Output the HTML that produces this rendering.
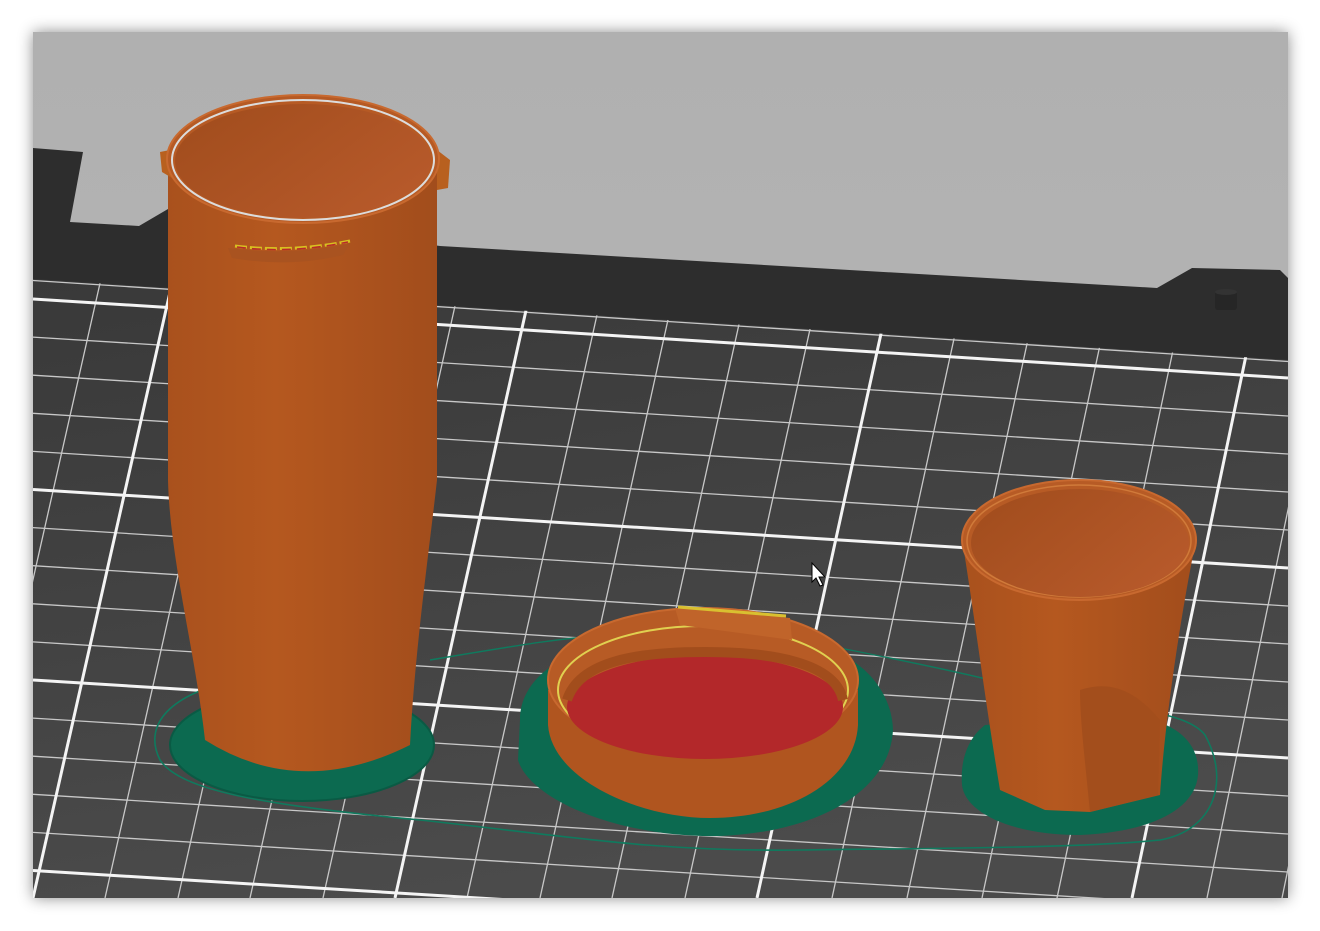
<!DOCTYPE html>
<html><head><meta charset="utf-8"><style>
html,body{margin:0;padding:0;background:#fff;width:1320px;height:931px;overflow:hidden}
.frame{position:absolute;left:33px;top:32px;width:1255px;height:866px;box-shadow:0 0 14px rgba(0,0,0,.45)}
svg{position:absolute;left:0;top:0;overflow:hidden}
</style></head><body>
<div class="frame"></div>
<svg width="1320" height="931" viewBox="0 0 1320 931">
<defs>
<clipPath id="img"><rect x="33" y="32" width="1255" height="866"/></clipPath>
<clipPath id="plate"><polygon points="33,279 1288,360 1288,898 33,898"/></clipPath>
<linearGradient id="sky" x1="0" y1="0" x2="0" y2="1"><stop offset="0" stop-color="#b0b0b0"/><stop offset="1" stop-color="#b8b8b8"/></linearGradient>
<linearGradient id="pl" x1="0" y1="0" x2="0.3" y2="1"><stop offset="0" stop-color="#393939"/><stop offset="1" stop-color="#4b4b4b"/></linearGradient>
<linearGradient id="body" x1="0" y1="0" x2="1" y2="0"><stop offset="0" stop-color="#a9511d"/><stop offset="0.4" stop-color="#b5581f"/><stop offset="1" stop-color="#a24d1c"/></linearGradient>
<linearGradient id="inner" x1="0" y1="0" x2="1" y2="0.6"><stop offset="0" stop-color="#a04c1c"/><stop offset="1" stop-color="#b6592a"/></linearGradient>
</defs>
<g clip-path="url(#img)">
<rect x="33" y="32" width="1255" height="866" fill="url(#sky)"/>
<polygon fill="#2d2d2d" points="33,148 83,152 70,222 139,226 168,209 440,246 1157,288 1192,268 1280,270 1288,278 1288,898 33,898"/>
<rect x="1215" y="291" width="22" height="19" rx="3" fill="#262626"/>
<ellipse cx="1226" cy="292" rx="11" ry="3" fill="#333"/>
<polygon points="33,279 1288,360 1288,898 33,898" fill="url(#pl)"/>
<g clip-path="url(#plate)">
<g stroke="#c8c8c8" stroke-width="1.3">
<line x1="31" y1="270" x2="-112" y2="898"/><line x1="103" y1="270" x2="-39" y2="898"/>
<line x1="247" y1="270" x2="105" y2="898"/><line x1="319" y1="270" x2="178" y2="898"/>
<line x1="391" y1="270" x2="250" y2="898"/><line x1="463" y1="270" x2="323" y2="898"/>
<line x1="607" y1="270" x2="467" y2="898"/><line x1="679" y1="270" x2="540" y2="898"/>
<line x1="751" y1="270" x2="612" y2="898"/><line x1="823" y1="270" x2="685" y2="898"/>
<line x1="969" y1="270" x2="832" y2="898"/><line x1="1043" y1="270" x2="907" y2="898"/>
<line x1="1116" y1="270" x2="982" y2="898"/><line x1="1190" y1="270" x2="1057" y2="898"/>
<line x1="1338" y1="270" x2="1207" y2="898"/><line x1="1412" y1="270" x2="1282" y2="898"/>
<line x1="33" y1="337.1" x2="1288" y2="416"/><line x1="33" y1="375.2" x2="1288" y2="454"/>
<line x1="33" y1="413.3" x2="1288" y2="492"/><line x1="33" y1="451.4" x2="1288" y2="530"/>
<line x1="33" y1="527.6" x2="1288" y2="606"/><line x1="33" y1="565.7" x2="1288" y2="644"/>
<line x1="33" y1="603.8" x2="1288" y2="682"/><line x1="33" y1="641.9" x2="1288" y2="720"/>
<line x1="33" y1="718.1" x2="1288" y2="796"/><line x1="33" y1="756.2" x2="1288" y2="834"/>
<line x1="33" y1="794.3" x2="1288" y2="872"/><line x1="33" y1="832.4" x2="1288" y2="910"/>
<line x1="33" y1="280.5" x2="1288" y2="361.5"/>
</g>
<g stroke="#f4f4f4" stroke-width="3">
<line x1="175" y1="270" x2="33" y2="898"/><line x1="535" y1="270" x2="395" y2="898"/>
<line x1="895" y1="270" x2="757" y2="898"/><line x1="1264" y1="270" x2="1132" y2="898"/>
<line x1="33" y1="299" x2="1288" y2="378"/><line x1="33" y1="489.5" x2="1288" y2="568"/>
<line x1="33" y1="680" x2="1288" y2="758"/><line x1="33" y1="870.5" x2="1288" y2="948"/>
</g>
</g>
<path d="M240,680 C180,690 140,720 160,760 C180,790 260,805 420,820 C560,835 650,852 800,850 C950,848 1080,848 1160,840 C1215,830 1230,780 1205,735 C1195,722 1170,715 1150,712" fill="none" stroke="#0f7a5e" stroke-width="1.6"/>
<path d="M430,660 C520,645 560,638 610,635 C700,632 800,640 850,650 C900,660 950,670 990,680" fill="none" stroke="#0f7a5e" stroke-width="1.4"/>
<ellipse cx="302" cy="745" rx="132" ry="56" fill="#0c6a50" stroke="#0a5a44" stroke-width="2"/>
<path d="M520,720 C520,680 560,650 620,642 L800,642 C860,650 892,690 893,730 C890,790 820,832 720,836 C620,838 530,800 518,760 Z" fill="#0c6a50"/>
<path d="M985,725 L1130,715 C1180,722 1200,745 1198,775 C1195,810 1150,832 1080,835 C1010,835 965,812 962,785 C960,760 968,738 985,725 Z" fill="#0c6a50"/>
<path d="M168,158 L168,480 C170,560 195,650 205,740 Q300,800 410,745 C415,650 428,560 437,480 L437,158 Z" fill="url(#body)"/>
<path d="M160,152 L170,150 L172,178 L162,172 Z" fill="#b8601f"/>
<path d="M437,150 L450,160 L448,188 L437,190 Z" fill="#b8601f"/>
<ellipse cx="303" cy="159" rx="136" ry="64" fill="#b65a24" stroke="#c8692f" stroke-width="2"/>
<ellipse cx="303" cy="160" rx="131" ry="60" fill="none" stroke="#dcdcdc" stroke-width="2"/>
<ellipse cx="303" cy="161" rx="128" ry="57" fill="url(#inner)"/>
<path d="M228,248 Q290,256 350,244 L343,255 Q290,268 232,258 Z" fill="#a95320"/>
<path d="M235,246 Q290,253 350,241" fill="none" stroke="#d8c020" stroke-width="3" stroke-dasharray="12,3"/>
<path d="M237,247 Q290,254 348,242" fill="none" stroke="#b82a2a" stroke-width="1.5" stroke-dasharray="9,6"/>
<path d="M548,690 L548,725 C552,780 640,818 710,818 C790,818 855,780 858,725 L858,690 Z" fill="#b0551f"/>
<ellipse cx="703" cy="680" rx="155" ry="72" fill="#b75b25" stroke="#c8692f" stroke-width="2"/>
<ellipse cx="703" cy="690" rx="145" ry="64" fill="none" stroke="#e0d050" stroke-width="2"/>
<ellipse cx="705" cy="707" rx="138" ry="52" fill="#b3282a"/>
<path d="M567,700 C580,660 640,652 705,652 C770,652 835,662 843,700" fill="none" stroke="#a24d1c" stroke-width="10"/>
<path d="M675,608 L790,618 L792,640 L680,625 Z" fill="#c0642a"/>
<path d="M678,607 L786,616" stroke="#d9c030" stroke-width="3"/>
<path d="M963,545 C975,620 985,700 1000,790 L1045,810 L1090,812 L1160,795 C1165,720 1180,620 1195,545 Z" fill="url(#body)"/>
<path d="M1080,690 C1110,680 1135,690 1160,720 L1158,795 L1090,812 C1085,760 1080,720 1080,690 Z" fill="#a34e1c"/>
<ellipse cx="1079" cy="540" rx="117" ry="60" fill="#b75b25" stroke="#c8692f" stroke-width="2"/>
<ellipse cx="1079" cy="541" rx="112" ry="56" fill="none" stroke="#d07a3a" stroke-width="1.5"/>
<ellipse cx="1080" cy="543" rx="109" ry="54" fill="url(#inner)"/>
<path d="M812,563 L812,582 L816,578 L820,586 L823,585 L819,577 L825,577 Z" fill="#fff" stroke="#000" stroke-width="1"/>
</g>
</svg>
</body></html>
